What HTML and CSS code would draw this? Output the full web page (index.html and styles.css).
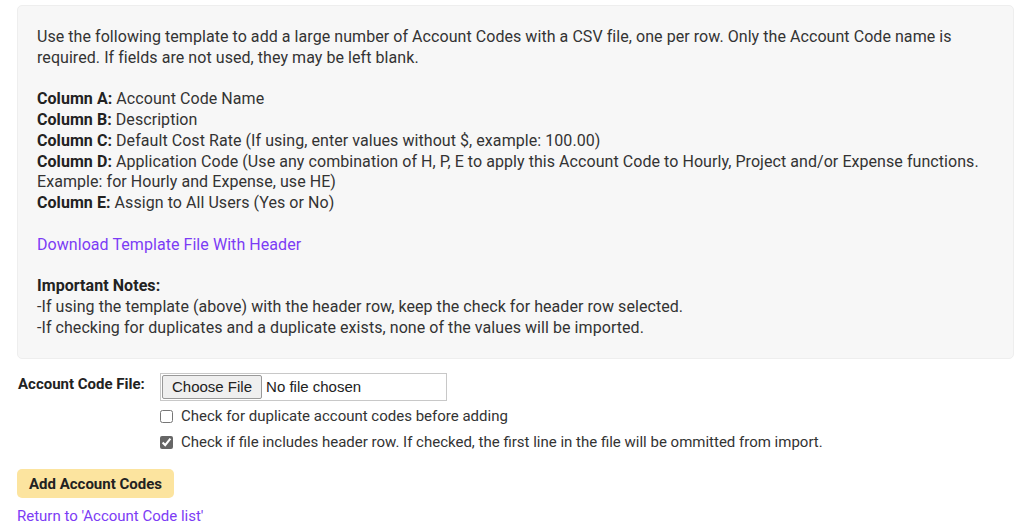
FILE: index.html
```html
<!DOCTYPE html>
<html>
<head lang="en">
    <meta charset="UTF-8">
    <title>Import Account Codes</title>
    <link rel="stylesheet" href="styles.css">
</head>
<body>
<div class="page">
    <div class="info">
        <p>Use the following template to add a large number of Account Codes with a CSV file, one per row. Only the Account Code name is required. If fields are not used, they may be left blank.</p>
        <p>
            <b>Column A:</b> Account Code Name<br>
            <b>Column B:</b> Description<br>
            <b>Column C:</b> Default Cost Rate (If using, enter values without $, example: 100.00)<br>
            <b>Column D:</b> Application Code (Use any combination of H, P, E to apply this Account Code to Hourly, Project and/or Expense functions. Example: for Hourly and Expense, use HE)<br>
            <b>Column E:</b> Assign to All Users (Yes or No)
        </p>
        <p><a href="#">Download Template File With Header</a></p>
        <p>
            <b>Important Notes:</b><br>
            -If using the template (above) with the header row, keep the check for header row selected.<br>
            -If checking for duplicates and a duplicate exists, none of the values will be imported.
        </p>
    </div>

    <form class="upload" action="#">
        <div class="row">
            <label class="lbl" for="file">Account Code File:</label>
            <div class="fields">
                <div class="file"><span class="choose">Choose File</span><span class="none">No file chosen</span></div>
                <label class="check"><input type="checkbox"> Check for duplicate account codes before adding</label>
                <label class="check"><input type="checkbox" checked> Check if file includes header row. If checked, the first line in the file will be ommitted from import.</label>
            </div>
        </div>
        <button type="button" class="btn">Add Account Codes</button>
        <a href="#" class="back">Return to 'Account Code list'</a>
    </form>
</div>
</body>
</html>
```

FILE: styles.css
```css
/* reset */
body,p,form{margin:0;padding:0}
body{font:15px/1.38 Roboto, "Liberation Sans", sans-serif;color:#333;background:#fff;}
a{text-decoration:none;color:#7c3cf5;}

.page{
    padding:5px 10px 0 17px;
}
.info{
    background:#f7f7f7;
    border:1px solid #eeeeee;
    border-radius:5px;
    padding:21px 19px 20px 19px;
    font-size:16px;
    letter-spacing:0.06px;
    line-height:20.75px;
}
.info p{
    margin-bottom:20.75px;
}
.info p:last-child{
    margin-bottom:0;
}
.info b{
    color:#222;
}

.upload{
    margin-top:14px;
    font-size:15px;
}
.row{
    display:flex;
}
.lbl{
    width:142px;
    padding-left:1px;
    font-weight:bold;
    color:#222;
    line-height:20px;
    margin-top:1px;
}
.fields{
    display:flex;
    flex-direction:column;
}
.file{
    display:flex;
    width:285px;
    height:26px;
    border:1px solid #c8c8c8;
    font-family:"Liberation Sans", Arial, sans-serif;
    font-size:15px;
    color:#222;
}
.choose{
    display:flex;
    align-items:center;
    padding:0 9px;
    background:#efefef;
    border:1px solid #999;
    border-radius:2px;
    margin:1px 0 1px 1px;
}
.none{
    display:flex;
    align-items:center;
    padding-left:4px;
}
.check{
    display:flex;
    align-items:center;
    height:20px;
    margin-top:5px;
    color:#333;
}
.check:last-child{
    margin-top:6px;
}
.check input{
    width:13px;
    height:13px;
    margin:0 8px 0 0;
    accent-color:#666;
}
.btn{
    display:block;
    margin-top:17px;
    height:29px;
    padding:0 12px;
    background:#fce49f;
    border:0;
    border-radius:5px;
    font:bold 15px Roboto, "Liberation Sans", sans-serif;
    color:#222;
}
.back{
    display:inline-block;
    margin-top:8px;
    font-size:15px;
}
```
